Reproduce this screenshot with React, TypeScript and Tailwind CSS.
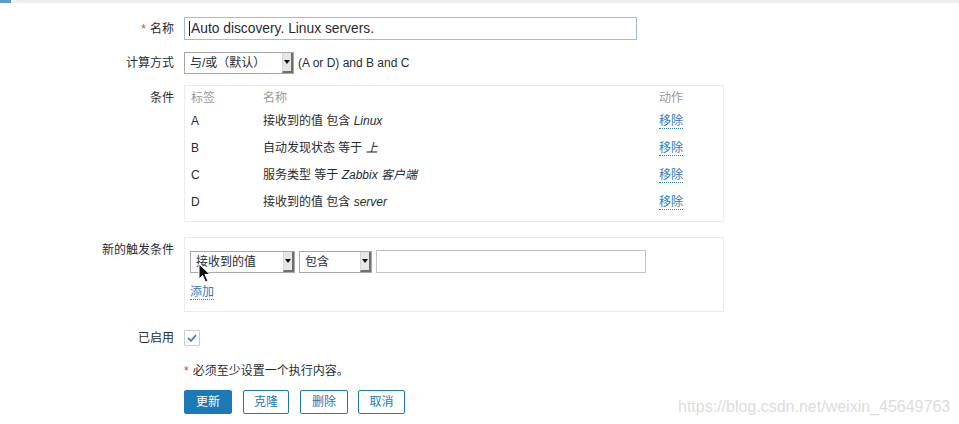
import React from 'react';

const font = { fontFamily: '"Liberation Sans", "Noto Sans CJK SC", sans-serif' };

function Select({ value, width }: { value: string; width: string }) {
  return (
    <div className={`${width} h-[22px] flex border border-[#a8a8a8] bg-white`}>
      <span className="flex-1 pl-[5px] leading-[20px] text-[12px] text-[#1f2c33] truncate">{value}</span>
      <span className="w-[11px] h-full flex items-center justify-center bg-[#e6e6e6] border-l border-[#d4d4d4] border-r-2 border-b-2 border-r-[#6f6f6f] border-b-[#6f6f6f]">
        <svg width="6" height="4" viewBox="0 0 6 4">
          <path d="M0 0 L6 0 L3 4 Z" fill="#111" />
        </svg>
      </span>
    </div>
  );
}

function Link({ children }: { children: React.ReactNode }) {
  return (
    <span className="text-[#2d7bbf] border-b border-dotted border-[#2d7bbf] leading-[14px] cursor-pointer">{children}</span>
  );
}

const rows = [
  { tag: 'A', pre: '接收到的值 包含 ', val: 'Linux' },
  { tag: 'B', pre: '自动发现状态 等于 ', val: '上' },
  { tag: 'C', pre: '服务类型 等于 ', val: 'Zabbix 客户端' },
  { tag: 'D', pre: '接收到的值 包含 ', val: 'server' },
];

function Row({ label, children, top = false, req = false, className = '' }: { label: string; children: React.ReactNode; top?: boolean; req?: boolean; className?: string }) {
  return (
    <div className={`flex ${top ? 'items-start' : 'items-center'} ${className}`}>
      <div className={`w-[175px] pr-[1px] text-right text-[12px] text-[#1f2c33] ${top ? 'pt-[4px]' : ''}`}>
        {req && <span className="text-[#d64040] mr-[4px]">*</span>}
        {label}
      </div>
      <div className="ml-[9px] flex-1">{children}</div>
    </div>
  );
}

export default function App() {
  return (
    <div className="relative w-[959px] h-[424px] bg-white overflow-hidden text-[12px] text-[#1f2c33]" style={font}>
      <div className="flex h-[3px] bg-[#efefef]">
        <div className="w-[11px] bg-[#5b9bc8]" />
      </div>

      <Row label="名称" req className="mt-[14px]">
        <div className="w-[453px] h-[23px] border border-[#a5bcd0] bg-white pl-[4px] leading-[21px] text-[13.8px]">
          <span className="border-l border-[#222] pl-[1px]">Auto discovery. Linux servers.</span>
        </div>
      </Row>

      <Row label="计算方式" className="mt-[12px]">
        <div className="flex items-center gap-[4px]">
          <Select value="与/或（默认）" width="w-[110px]" />
          <span>(A or D) and B and C</span>
        </div>
      </Row>

      <Row label="条件" top className="mt-[11px]">
        <div className="w-[540px] h-[137px] border border-[#ececec] px-[6px] pt-[3px]">
          <div className="flex h-[18px] items-center text-[#999]">
            <span className="w-[72px]">标签</span>
            <span className="flex-1">名称</span>
            <span className="w-[58px]">动作</span>
          </div>
          {rows.map((r) => (
            <div key={r.tag} className="flex h-[27px] items-center">
              <span className="w-[72px]">{r.tag}</span>
              <span className="flex-1">
                {r.pre}
                <i>{r.val}</i>
              </span>
              <span className="w-[58px]">
                <Link>移除</Link>
              </span>
            </div>
          ))}
        </div>
      </Row>

      <Row label="新的触发条件" top className="mt-[15px]">
        <div className="w-[540px] h-[75px] border border-[#ececec] px-[5px] pt-[12px]">
          <div className="flex items-center gap-[4px]">
            <Select value="接收到的值" width="w-[105px]" />
            <Select value="包含" width="w-[73px]" />
            <div className="w-[270px] h-[23px] border border-[#c2c2c2] bg-white" />
          </div>
          <div className="mt-[10px]">
            <Link>添加</Link>
          </div>
        </div>
      </Row>

      <Row label="已启用" className="mt-[17px]">
        <div className="w-[16px] h-[16px] border border-[#c5ced5] rounded-[1px] flex items-center justify-center bg-white">
          <svg width="10" height="8" viewBox="0 0 10 8">
            <path d="M1 4 L4 6.8 L9 1.2" fill="none" stroke="#3a86c0" strokeWidth="1.8" />
          </svg>
        </div>
      </Row>

      <div className="ml-[184px] mt-[16px] leading-[16px]">
        <span className="text-[#d64040] mr-[4px]">*</span>必须至少设置一个执行内容。
      </div>

      <div className="ml-[184px] mt-[11px] flex gap-[11px]">
        <button className="w-[48px] h-[24px] bg-[#1b79b5] border border-[#1b79b5] text-white rounded-[2px]">更新</button>
        <button className="w-[46px] h-[24px] bg-white border border-[#1b79b5] text-[#1b79b5] rounded-[2px]">克隆</button>
        <button className="w-[48px] h-[24px] bg-white border border-[#1b79b5] text-[#1b79b5] rounded-[2px]">删除</button>
        <button className="w-[47px] h-[24px] bg-white border border-[#1b79b5] text-[#1b79b5] rounded-[2px] -ml-[1px]">取消</button>
      </div>

      <svg className="absolute left-[198px] top-[263px]" width="14" height="20" viewBox="0 0 14 20">
        <path d="M1 1 L1 16 L4.5 12.5 L7.5 19 L10 18 L7 11.5 L12 11.5 Z" fill="#111" stroke="#fff" strokeWidth="1" />
      </svg>

      <div className="absolute left-[678px] top-[395px] text-[16px] text-[#dcdcdc]" style={{ fontFamily: '"Liberation Sans", sans-serif' }}>
        https://blog.csdn.net/weixin_45649763
      </div>
    </div>
  );
}
